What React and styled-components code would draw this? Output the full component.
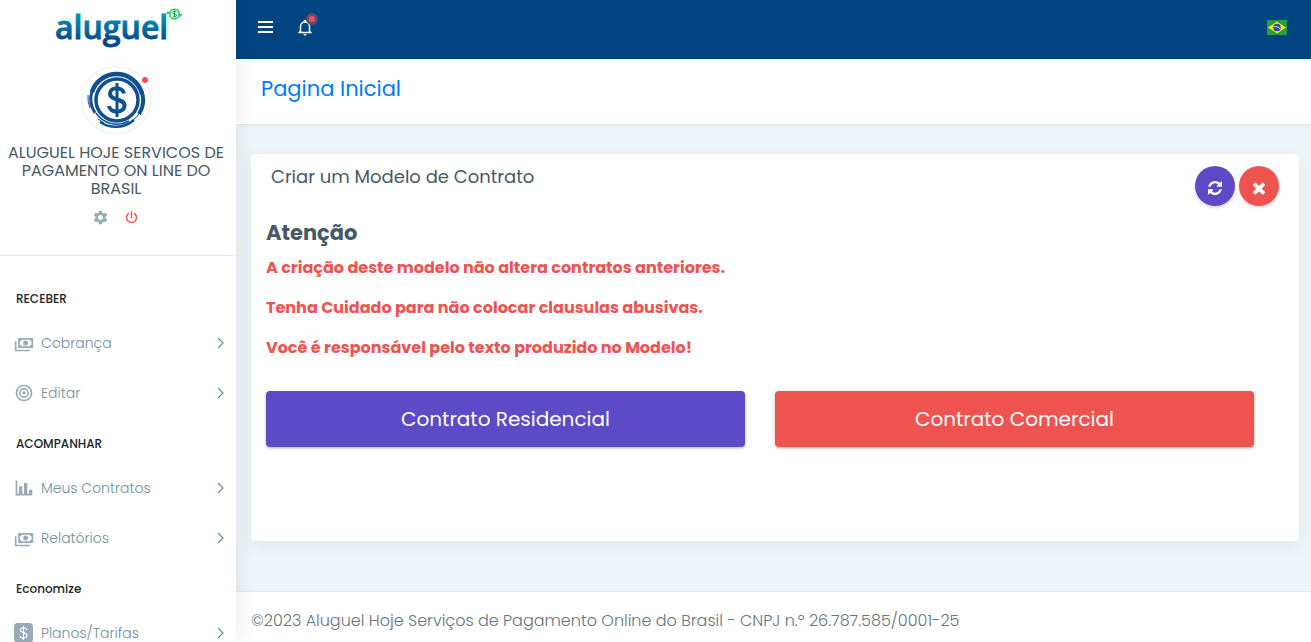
import React from "react";
import styled, { createGlobalStyle } from "styled-components";
import { MdSettings } from "react-icons/md";

const colors = {
  navy: "#004482",
  page: "#edf5f8",
  slate: "#455a64",
  menu: "#728f9e",
  icon: "#99abb4",
  red: "#ef5350",
  purple: "#5c4ac7",
  link: "#007bff",
};

const GlobalStyle = createGlobalStyle`
  *, *::before, *::after { box-sizing: border-box; }
  body {
    margin: 0;
    background: ${colors.page};
    color: ${colors.slate};
    font-family: Poppins, Inter, sans-serif;
    font-size: 14px;
  }
  h1, h2, h3, h4, p, ul { margin: 0; padding: 0; }
  button { font-family: inherit; border: 0; padding: 0; cursor: pointer; }
  svg { display: block; }
`;

const Shell = styled.div`
  display: grid;
  grid-template-columns: 236px minmax(0, 1fr);
  height: 100vh;
`;

const Sidebar = styled.aside`
  position: relative;
  background: #fff;
  box-shadow: 1px 0 20px rgba(0, 0, 0, 0.08);
  height: 100vh;
  overflow-x: hidden;
  overflow-y: auto;
  scrollbar-width: none;
`;

const Brand = styled.a`
  display: flex;
  justify-content: center;
  height: 56px;
`;

const Profile = styled.section`
  display: flex;
  flex-direction: column;
  align-items: center;
  height: 200px;
  padding: 10px 4px 0 0;
  border-bottom: 1px solid #e9ecef;
`;

const Avatar = styled.div`
  position: relative;
  width: 70px;
  height: 68px;
  border: 1px solid #eceff1;
  border-radius: 50%;
  display: grid;
  place-items: center;
`;

const StatusDot = styled.span`
  position: absolute;
  top: 10px;
  right: 2px;
  width: 6px;
  height: 6px;
  border-radius: 50%;
  background: ${colors.red};
`;

const ProfileName = styled.h1`
  margin-top: 10px;
  width: 228px;
  text-align: center;
  font-size: 16px;
  font-weight: 400;
  line-height: 18px;
`;

const ProfileActions = styled.div`
  display: flex;
  gap: 14px;
  margin-top: 11px;
`;

const PlainButton = styled.button`
  display: grid;
  place-items: center;
  background: none;
  color: ${(p) => p.$color || "#fff"};
  min-width: 15px;
  height: 16px;
`;

const Nav = styled.nav`
  padding-top: 17px;
`;

const NavTitle = styled.h2`
  height: 45px;
  padding: 16px 16px 0;
  color: #212529;
  font-size: 12px;
  font-weight: 500;
  line-height: 20px;
`;

const NavList = styled.ul`
  list-style: none;
`;

const NavLink = styled.a`
  display: flex;
  align-items: center;
  height: 50px;
  padding: 0 12px 0 14px;
  color: ${colors.menu};
  font-size: 14px;
  font-weight: 300;
  text-decoration: none;

  span {
    flex: 1;
    margin-left: 7px;
  }
  > svg:first-child {
    color: ${colors.icon};
  }
`;

const Main = styled.div`
  display: flex;
  flex-direction: column;
  min-height: 100vh;
`;

const TopBar = styled.header`
  display: flex;
  align-items: center;
  height: 59px;
  padding: 0 24px 5px 22px;
  background: ${colors.navy};
`;

const BellWrap = styled.div`
  position: relative;
  margin-left: 22px;
  margin-right: auto;
`;

const Pulse = styled.span`
  position: absolute;
  top: -6px;
  right: -4px;
  width: 12px;
  height: 12px;
  border-radius: 50%;
  border: 3px solid #5f4a70;
  background: ${colors.red};
`;

const PageTitle = styled.div`
  height: 65px;
  padding: 15px 25px 0;
  background: #fff;
  box-shadow: 1px 0 5px rgba(0, 0, 0, 0.1);

  a {
    color: ${colors.link};
    font-size: 21px;
    line-height: 30px;
    text-decoration: none;
  }
`;

const Content = styled.main`
  flex: 1;
  padding: 30px 12px 50px 15px;
`;

const Card = styled.section`
  min-height: 387px;
  padding: 12px 20px 24px 15px;
  border-radius: 4px;
  background: #fff;
  box-shadow: 0 5px 20px rgba(0, 0, 0, 0.05);
`;

const CardHeader = styled.div`
  display: flex;
  justify-content: space-between;
  padding-left: 5px;

  h2 {
    font-size: 18px;
    font-weight: 400;
    line-height: 22px;
  }
`;

const CardTools = styled.div`
  display: flex;
  gap: 4px;
`;

const RoundButton = styled.button`
  display: grid;
  place-items: center;
  width: 40px;
  height: 40px;
  padding-top: 4px;
  border-radius: 50%;
  background: ${(p) => p.$color};
  color: #fff;
  box-shadow: 0 2px 3px ${(p) => p.$color}33;
`;

const Heading = styled.h3`
  margin-top: 12px;
  font-size: 21px;
  font-weight: 700;
  line-height: 30px;
`;

const Warning = styled.p`
  margin-bottom: 20px;
  color: ${colors.red};
  font-size: 16px;
  font-weight: 700;
  line-height: 20px;
`;

const Warnings = styled.div`
  padding-top: 10px;
`;

const Choices = styled.div`
  display: grid;
  grid-template-columns: 1fr 1fr;
  gap: 30px;
  margin-top: 33px;
  padding-right: 25px;
`;

const ChoiceButton = styled.button`
  height: 56px;
  border-radius: 4px;
  background: ${(p) => p.$color};
  color: #fff;
  font-size: 20px;
  font-weight: 400;
  box-shadow: 0 1px 3px rgba(0, 0, 0, 0.3);
`;

const Footer = styled.footer`
  height: 51px;
  padding: 17px 15px;
  border-top: 1px solid #e4e9ec;
  background: #fff;
  color: #67757c;
  font-size: 16px;
  font-weight: 300;
  line-height: 24px;
`;

function Logo() {
  return (
    <svg width="140" height="56" viewBox="0 0 140 56" role="img" aria-label="aluguel">
      <defs>
        <linearGradient id="brandFill" x1="0" y1="0" x2="0" y2="1">
          <stop offset="0.2" stopColor="#0097bd" />
          <stop offset="0.85" stopColor="#024789" />
        </linearGradient>
      </defs>
      <text x="7" y="39" fontFamily="Open Sans, sans-serif" fontWeight="600" fontSize="32" fill="url(#brandFill)" stroke="url(#brandFill)" strokeWidth="0.8">
        aluguel
      </text>
      <circle cx="126.500" cy="14" r="4.800" fill="#fff" stroke="#2bc465" strokeWidth="1.6" />
      <path d="M120 11l2 3h-4zM132.500 17l-2-3h4z" fill="#2bc465" />
      <path d="M128.500 12c-1-1-4-1-4 .7s4 .9 4 2.700-3 1.600-4 .5M126.500 10.500v7" fill="none" stroke="#159a48" />
    </svg>
  );
}

function Seal() {
  return (
    <svg width="60" height="60" viewBox="0 0 60 60" fill="none" stroke="#11508f" aria-hidden="true">
      <circle cx="31" cy="30" r="21" strokeWidth="3.500" />
      <path d="M6 22A26 26 0 0 1 56 24" strokeWidth="4.500" />
      <path d="M55 20A26.500 26.500 0 0 1 53 44" strokeWidth="4" />
      <path d="M6 21A26 26 0 0 0 9 43" strokeWidth="3" />
      <path d="M10 43A25 25 0 0 0 43 51" strokeWidth="1.500" />
      <path d="M14 52A28 28 0 0 0 48 50" strokeWidth="2.500" />
      <path d="M2 25A28 28 0 0 0 4 38M53 44A28 28 0 0 1 46 51M12 49l6 4" strokeWidth="1" />
      <path d="M38 23.500C37 16.500 24 16.500 24 23.500C24 31 38.500 28 38.500 35.500C38.500 43.500 24 43.500 23 36" strokeWidth="4" />
      <path d="M31 13v34" strokeWidth="3" />
    </svg>
  );
}

const shapes = {
  cash: "M5,6H23V18H5V6M14,9A3,3 0 0,1 17,12A3,3 0 0,1 14,15A3,3 0 0,1 11,12A3,3 0 0,1 14,9M9,8A2,2 0 0,1 7,10V14A2,2 0 0,1 9,16H19A2,2 0 0,1 21,14V10A2,2 0 0,1 19,8H9M1,10H3V20H19V22H1V10Z",
  chart: "M22,21H2V3H4V19H6V10H10V19H12V6H16V19H18V14H22V21Z",
  power:
    "M16.56,5.44L15.11,6.89C16.84,7.94 18,9.83 18,12A6,6 0 0,1 12,18A6,6 0 0,1 6,12C6,9.83 7.16,7.94 8.88,6.88L7.44,5.44C5.36,6.88 4,9.28 4,12A8,8 0 0,0 12,20A8,8 0 0,0 20,12C20,9.28 18.64,6.88 16.56,5.44M13,3H11V13H13",
  bell: "M10,20H14A2,2 0 0,1 12,22A2,2 0 0,1 10,20M21,18V19H3V18L5,16V10C5,6.9 7.03,4.17 10,3.29C10,3.19 10,3.1 10,3A2,2 0 0,1 12,1A2,2 0 0,1 14,3C14,3.1 14,3.19 14,3.29C16.97,4.17 19,6.9 19,10V16L21,18M17,10A5,5 0 0,0 12,5A5,5 0 0,0 7,10V17H17V10Z",
  refresh:
    "M1511 928q0 5-1 7-64 268-268 434.5t-478 166.5q-146 0-282.5-55t-243.5-157l-129 129q-19 19-45 19t-45-19-19-45v-448q0-26 19-45t45-19h448q26 0 45 19t19 45-19 45l-137 137q71 66 161 102t187 36q134 0 250-65t186-179q11-17 53-117 8-23 30-23h192q13 0 22.500 9.500t9.500 22.500zm25-800v448q0 26-19 45t-45 19h-448q-26 0-45-19t-19-45 19-45l138-138q-148-137-349-137-134 0-250 65t-186 179q-11 17-53 117-8 23-30 23h-199q-13 0-22.500-9.500t-9.500-22.500v-7q65-268 270-434.500t480-166.500q146 0 284 55.500t245 156.500l130-129q19-19 45-19t45 19 19 45z",
  times:
    "M1490 1322q0 40-28 68l-136 136q-28 28-68 28t-68-28l-294-294-294 294q-28 28-68 28t-68-28l-136-136q-28-28-28-68t28-68l294-294-294-294q-28-28-28-68t28-68l136-136q28-28 68-28t68 28l294 294 294-294q28-28 68-28t68 28l136 136q28 28 28 68t-28 68l-294 294 294 294q28 28 28 68z",
};

function Glyph({ name, size = 20, box = 24 }) {
  return (
    <svg width={size} height={size} viewBox={`0 0 ${box} ${box}`} fill="currentColor" fillRule="evenodd" aria-hidden="true">
      <path d={shapes[name]} />
    </svg>
  );
}

function Target() {
  return (
    <svg width="20" height="20" viewBox="0 0 24 24" fill="none" stroke="currentColor" strokeWidth="2" aria-hidden="true">
      <circle cx="12" cy="12" r="9" />
      <circle cx="12" cy="12" r="5" />
      <circle cx="12" cy="12" r="2" fill="currentColor" stroke="none" />
    </svg>
  );
}

function DollarBox() {
  return (
    <svg width="20" height="20" viewBox="0 0 20 20" fill="none" aria-hidden="true">
      <rect width="19" height="20" rx="4" fill="currentColor" />
      <path d="M12.800 7C12.300 4 6.300 4 6.300 7C6.300 10.200 13 9 13 12.500C13 15.800 6.500 15.800 6 12.800M9.500 3v14" stroke="#fff" strokeWidth="1.1" />
    </svg>
  );
}

function Chevron() {
  return (
    <svg width="8" height="12" viewBox="0 0 8 12" fill="none" stroke="currentColor" strokeWidth="1.2" aria-hidden="true">
      <path d="M2 1l5 5-5 5" />
    </svg>
  );
}

function Menu() {
  return (
    <svg width="16" height="12" viewBox="0 0 16 12" stroke="#fff" strokeWidth="2" aria-hidden="true">
      <path d="M0 1h15M0 6h15M0 11h15" />
    </svg>
  );
}

function BrazilFlag() {
  return (
    <svg width="20" height="15" viewBox="0 0 20 15" role="img" aria-label="Brasil">
      <path fill="#229e45" d="M0 0h20v15H0z" />
      <path fill="#f8e509" d="M10 1.500l9 6-9 6-9-6z" />
      <circle cx="10" cy="7.500" r="3.800" fill="#2b49a3" />
      <path d="M6.500 6.300Q10.500 6 13.500 9" fill="none" stroke="#ffffef" strokeWidth="0.8" />
    </svg>
  );
}

const sections = [
  {
    title: "RECEBER",
    items: [
      { label: "Cobrança", icon: <Glyph name="cash" /> },
      { label: "Editar", icon: <Target /> },
    ],
  },
  {
    title: "ACOMPANHAR",
    items: [
      { label: "Meus Contratos", icon: <Glyph name="chart" /> },
      { label: "Relatórios", icon: <Glyph name="cash" /> },
    ],
  },
  {
    title: "Economize",
    items: [{ label: "Planos/Tarifas", icon: <DollarBox /> }],
  },
];

export default function App() {
  return (
    <>
      <GlobalStyle />
      <Shell>
        <Sidebar>
          <Brand href="#">
            <Logo />
          </Brand>
          <Profile>
            <Avatar>
              <Seal />
              <StatusDot />
            </Avatar>
            <ProfileName>ALUGUEL HOJE SERVICOS DE PAGAMENTO ON LINE DO BRASIL</ProfileName>
            <ProfileActions>
              <PlainButton $color={colors.icon} aria-label="Configurações">
                <MdSettings size={17} />
              </PlainButton>
              <PlainButton $color={colors.red} aria-label="Sair">
                <Glyph name="power" size={17} />
              </PlainButton>
            </ProfileActions>
          </Profile>
          <Nav>
            {sections.map((section) => (
              <React.Fragment key={section.title}>
                <NavTitle>{section.title}</NavTitle>
                <NavList>
                  {section.items.map((item) => (
                    <li key={item.label}>
                      <NavLink href="#">
                        {item.icon}
                        <span>{item.label}</span>
                        <Chevron />
                      </NavLink>
                    </li>
                  ))}
                </NavList>
              </React.Fragment>
            ))}
          </Nav>
        </Sidebar>
        <Main>
          <TopBar>
            <PlainButton aria-label="Menu">
              <Menu />
            </PlainButton>
            <BellWrap>
              <PlainButton aria-label="Notificações">
                <Glyph name="bell" size={18} />
              </PlainButton>
              <Pulse />
            </BellWrap>
            <PlainButton aria-label="Idioma">
              <BrazilFlag />
            </PlainButton>
          </TopBar>
          <PageTitle>
            <a href="#">Pagina Inicial</a>
          </PageTitle>
          <Content>
            <Card>
              <CardHeader>
                <h2>Criar um Modelo de Contrato</h2>
                <CardTools>
                  <RoundButton $color={colors.purple} aria-label="Atualizar">
                    <Glyph name="refresh" size={14} box={1536} />
                  </RoundButton>
                  <RoundButton $color={colors.red} aria-label="Fechar">
                    <Glyph name="times" size={18} box={1792} />
                  </RoundButton>
                </CardTools>
              </CardHeader>
              <Heading>Atenção</Heading>
              <Warnings>
                <Warning>A criação deste modelo não altera contratos anteriores.</Warning>
                <Warning>Tenha Cuidado para não colocar clausulas abusivas.</Warning>
                <Warning>Você é responsável pelo texto produzido no Modelo!</Warning>
              </Warnings>
              <Choices>
                <ChoiceButton $color={colors.purple}>Contrato Residencial</ChoiceButton>
                <ChoiceButton $color={colors.red}>Contrato Comercial</ChoiceButton>
              </Choices>
            </Card>
          </Content>
          <Footer>©2023 Aluguel Hoje Serviços de Pagamento Online do Brasil - CNPJ n.º 26.787.585/0001-25</Footer>
        </Main>
      </Shell>
    </>
  );
}
